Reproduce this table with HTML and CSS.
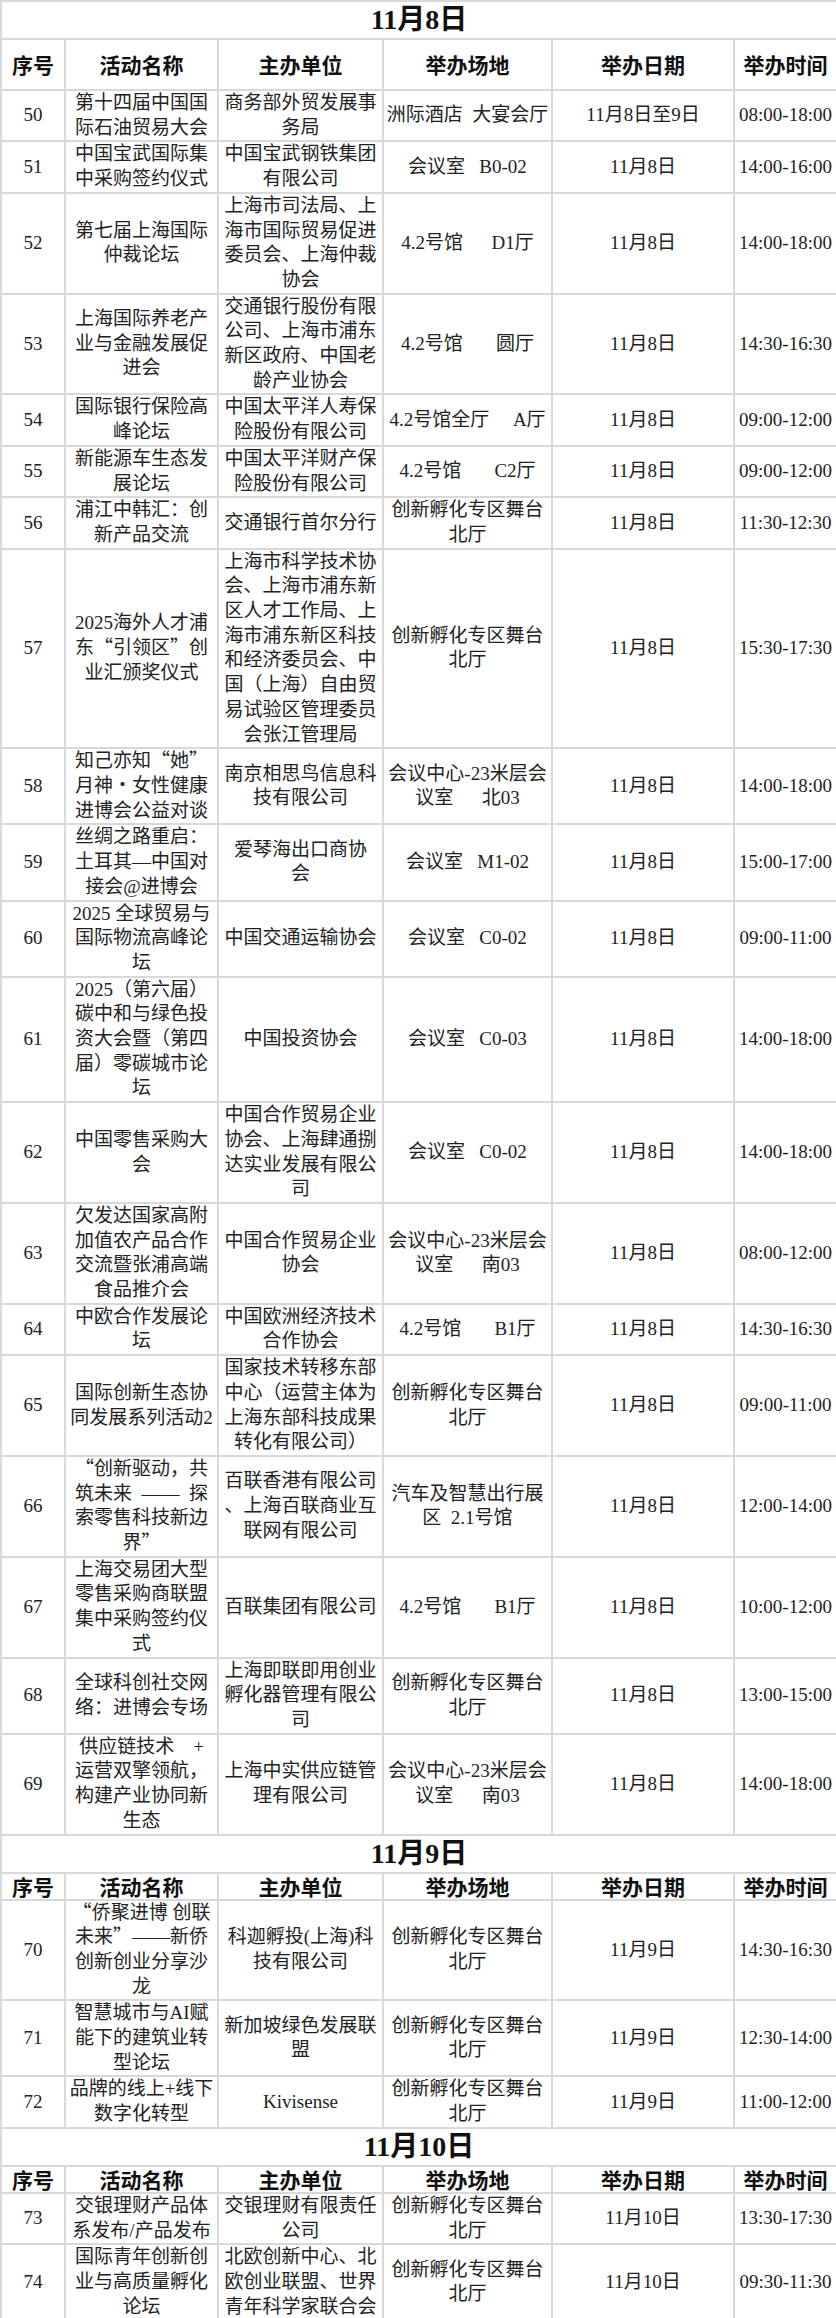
FILE: index.html
```html
<!DOCTYPE html>
<html lang="zh-CN">
<head>
<meta charset="utf-8">
<title>活动日程</title>
<link rel="stylesheet" href="styles.css">
</head>
<body>
<table class="schedule">
<colgroup><col class="c-no"><col class="c-name"><col class="c-org"><col class="c-venue"><col class="c-date"><col class="c-time"></colgroup>
<tbody>
<tr class="day"><td colspan="6">11月8日</td></tr>
<tr class="head"><th>序号</th><th>活动名称</th><th>主办单位</th><th>举办场地</th><th>举办日期</th><th>举办时间</th></tr>
<tr><td>50</td><td>第十四届中国国<br>际石油贸易大会</td><td>商务部外贸发展事<br>务局</td><td>洲际酒店  大宴会厅</td><td>11月8日至9日</td><td>08:00-18:00</td></tr>
<tr><td>51</td><td>中国宝武国际集<br>中采购签约仪式</td><td>中国宝武钢铁集团<br>有限公司</td><td>会议室   B0-02</td><td>11月8日</td><td>14:00-16:00</td></tr>
<tr><td>52</td><td>第七届上海国际<br>仲裁论坛</td><td>上海市司法局、上<br>海市国际贸易促进<br>委员会、上海仲裁<br>协会</td><td>4.2号馆      D1厅</td><td>11月8日</td><td>14:00-18:00</td></tr>
<tr><td>53</td><td>上海国际养老产<br>业与金融发展促<br>进会</td><td>交通银行股份有限<br>公司、上海市浦东<br>新区政府、中国老<br>龄产业协会</td><td>4.2号馆       圆厅</td><td>11月8日</td><td>14:30-16:30</td></tr>
<tr><td>54</td><td>国际银行保险高<br>峰论坛</td><td>中国太平洋人寿保<br>险股份有限公司</td><td>4.2号馆全厅     A厅</td><td>11月8日</td><td>09:00-12:00</td></tr>
<tr><td>55</td><td>新能源车生态发<br>展论坛</td><td>中国太平洋财产保<br>险股份有限公司</td><td>4.2号馆       C2厅</td><td>11月8日</td><td>09:00-12:00</td></tr>
<tr><td>56</td><td>浦江中韩汇：创<br>新产品交流</td><td>交通银行首尔分行</td><td>创新孵化专区舞台<br>北厅</td><td>11月8日</td><td>11:30-12:30</td></tr>
<tr><td>57</td><td>2025海外人才浦<br>东<span class="q">“</span>引领区<span class="q">”</span>创<br>业汇颁奖仪式</td><td>上海市科学技术协<br>会、上海市浦东新<br>区人才工作局、上<br>海市浦东新区科技<br>和经济委员会、中<br>国（上海）自由贸<br>易试验区管理委员<br>会张江管理局</td><td>创新孵化专区舞台<br>北厅</td><td>11月8日</td><td>15:30-17:30</td></tr>
<tr><td>58</td><td>知己亦知<span class="q">“</span>她<span class="q">”</span><br>月神<span class="q">•</span>女性健康<br>进博会公益对谈</td><td>南京相思鸟信息科<br>技有限公司</td><td>会议中心-23米层会<br>议室      北03</td><td>11月8日</td><td>14:00-18:00</td></tr>
<tr><td>59</td><td>丝绸之路重启：<br>土耳其—中国对<br>接会@进博会</td><td>爱琴海出口商协<br>会</td><td>会议室   M1-02</td><td>11月8日</td><td>15:00-17:00</td></tr>
<tr><td>60</td><td>2025 全球贸易与<br>国际物流高峰论<br>坛</td><td>中国交通运输协会</td><td>会议室   C0-02</td><td>11月8日</td><td>09:00-11:00</td></tr>
<tr><td>61</td><td>2025（第六届）<br>碳中和与绿色投<br>资大会暨（第四<br>届）零碳城市论<br>坛</td><td>中国投资协会</td><td>会议室   C0-03</td><td>11月8日</td><td>14:00-18:00</td></tr>
<tr><td>62</td><td>中国零售采购大<br>会</td><td>中国合作贸易企业<br>协会、上海肆通捌<br>达实业发展有限公<br>司</td><td>会议室   C0-02</td><td>11月8日</td><td>14:00-18:00</td></tr>
<tr><td>63</td><td>欠发达国家高附<br>加值农产品合作<br>交流暨张浦高端<br>食品推介会</td><td>中国合作贸易企业<br>协会</td><td>会议中心-23米层会<br>议室      南03</td><td>11月8日</td><td>08:00-12:00</td></tr>
<tr><td>64</td><td>中欧合作发展论<br>坛</td><td>中国欧洲经济技术<br>合作协会</td><td>4.2号馆       B1厅</td><td>11月8日</td><td>14:30-16:30</td></tr>
<tr><td>65</td><td>国际创新生态协<br>同发展系列活动2</td><td>国家技术转移东部<br>中心（运营主体为<br>上海东部科技成果<br>转化有限公司）</td><td>创新孵化专区舞台<br>北厅</td><td>11月8日</td><td>09:00-11:00</td></tr>
<tr><td>66</td><td><span class="q">“</span>创新驱动，共<br>筑未来  ——  探<br>索零售科技新边<br>界<span class="q">”</span></td><td>百联香港有限公司<br>、上海百联商业互<br>联网有限公司</td><td>汽车及智慧出行展<br>区  2.1号馆</td><td>11月8日</td><td>12:00-14:00</td></tr>
<tr><td>67</td><td>上海交易团大型<br>零售采购商联盟<br>集中采购签约仪<br>式</td><td>百联集团有限公司</td><td>4.2号馆       B1厅</td><td>11月8日</td><td>10:00-12:00</td></tr>
<tr><td>68</td><td>全球科创社交网<br>络：进博会专场</td><td>上海即联即用创业<br>孵化器管理有限公<br>司</td><td>创新孵化专区舞台<br>北厅</td><td>11月8日</td><td>13:00-15:00</td></tr>
<tr><td>69</td><td>供应链技术    +<br>运营双擎领航，<br>构建产业协同新<br>生态</td><td>上海中实供应链管<br>理有限公司</td><td>会议中心-23米层会<br>议室      南03</td><td>11月8日</td><td>14:00-18:00</td></tr>
</tbody>
<tbody>
<tr class="day"><td colspan="6">11月9日</td></tr>
<tr class="head compact"><th>序号</th><th>活动名称</th><th>主办单位</th><th>举办场地</th><th>举办日期</th><th>举办时间</th></tr>
<tr><td>70</td><td><span class="q">“</span>侨聚进博 创联<br>未来<span class="q">”</span>——新侨<br>创新创业分享沙<br>龙</td><td>科迦孵投(上海)科<br>技有限公司</td><td>创新孵化专区舞台<br>北厅</td><td>11月9日</td><td>14:30-16:30</td></tr>
<tr><td>71</td><td>智慧城市与AI赋<br>能下的建筑业转<br>型论坛</td><td>新加坡绿色发展联<br>盟</td><td>创新孵化专区舞台<br>北厅</td><td>11月9日</td><td>12:30-14:00</td></tr>
<tr><td>72</td><td>品牌的线上+线下<br>数字化转型</td><td>Kivisense</td><td>创新孵化专区舞台<br>北厅</td><td>11月9日</td><td>11:00-12:00</td></tr>
</tbody>
<tbody>
<tr class="day"><td colspan="6">11月10日</td></tr>
<tr class="head compact"><th>序号</th><th>活动名称</th><th>主办单位</th><th>举办场地</th><th>举办日期</th><th>举办时间</th></tr>
<tr><td>73</td><td>交银理财产品体<br>系发布/产品发布</td><td>交银理财有限责任<br>公司</td><td>创新孵化专区舞台<br>北厅</td><td>11月10日</td><td>13:30-17:30</td></tr>
<tr><td>74</td><td>国际青年创新创<br>业与高质量孵化<br>论坛</td><td>北欧创新中心、北<br>欧创业联盟、世界<br>青年科学家联合会</td><td>创新孵化专区舞台<br>北厅</td><td>11月10日</td><td>09:30-11:30</td></tr>
</tbody>
</table>
</body>
</html>
```
FILE: styles.css
```css
html, body {
  margin: 0;
  padding: 0;
  background: #ffffff;
}

body {
  font-family: "Liberation Serif", "Noto Sans CJK SC", serif;
  color: #222222;
}

.schedule {
  width: 836px;
  border-collapse: collapse;
  table-layout: fixed;
}

.c-no { width: 64px; }
.c-name { width: 153px; }
.c-org { width: 165px; }
.c-venue { width: 169px; }
.c-date { width: 182px; }
.c-time { width: 103px; }

.schedule td,
.schedule th {
  border: 2px solid #d9d9d9;
  padding: 0;
  text-align: center;
  vertical-align: middle;
  font-size: 19px;
  line-height: 24.7px;
  font-weight: normal;
  white-space: pre;
}

.q {
  font-family: "Noto Sans CJK SC", sans-serif;
  line-height: 0;
}

.day td {
  font-family: "Liberation Serif", "Noto Sans CJK SC", serif;
  font-size: 28px;
  font-weight: bold;
  line-height: 36px;
  color: #111111;
}

.head th {
  font-family: "Noto Sans CJK SC", sans-serif;
  font-weight: 700;
  font-size: 21px;
  line-height: 49px;
  color: #111111;
}

.head.compact th {
  line-height: 25px;
}
```
